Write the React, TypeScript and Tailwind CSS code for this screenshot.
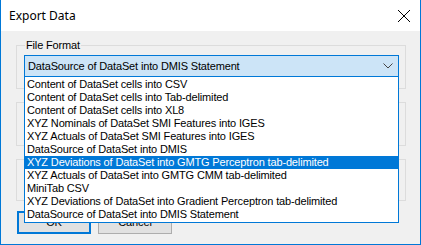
import React from "react";

const items = [
  "Content of DataSet cells into CSV",
  "Content of DataSet cells into Tab-delimited",
  "Content of DataSet cells into XL8",
  "XYZ Nominals of DataSet SMI Features into IGES",
  "XYZ Actuals of DataSet SMI Features into IGES",
  "DataSource of DataSet into DMIS",
  "XYZ Deviations of DataSet into GMTG Perceptron tab-delimited",
  "XYZ Actuals of DataSet into GMTG CMM tab-delimited",
  "MiniTab CSV",
  "XYZ Deviations of DataSet into Gradient Perceptron tab-delimited",
  "DataSource of DataSet into DMIS Statement",
];

export default function App() {
  const sans = { fontFamily: '"Liberation Sans", Arial, sans-serif' };
  return (
    <div className="w-[421px] h-[245px] flex flex-col border-x border-b border-[#0078d7] bg-[#f0f0f0] overflow-hidden" style={sans}>
      <div className="h-[31px] bg-white flex items-center justify-between pl-[8px] pr-[9px] shrink-0">
        <span className="text-[12px] text-black" style={{ fontFamily: '"Noto Sans", "Open Sans", sans-serif' }}>Export Data</span>
        <svg width="14" height="14" viewBox="0 0 14 14" className="mt-[1px]">
          <path d="M1 1 L13 13 M13 1 L1 13" stroke="#000" strokeWidth="1" />
        </svg>
      </div>
      <div className="flex-1 flex flex-col pl-[15px] pt-[14px] tracking-[-0.15px]">
        <div className="relative w-[390px] h-[44px] border border-[#dcdcdc]">
          <span className="absolute -top-[8px] left-[8px] px-[1px] bg-[#f0f0f0] text-[11px] leading-[14px] text-black">File Format</span>
          <div className="relative ml-[7px] mt-[9px] w-[375px]">
            <div className="h-[22px] border border-[#0078d7] bg-[#cce4f7] flex items-center justify-between pl-[3px] pr-[5px]">
              <span className="text-[11px] text-black">DataSource of DataSet into DMIS Statement</span>
              <svg width="10" height="6" viewBox="0 0 10 6">
                <path d="M0.5 0.5 L5 5 L9.5 0.5" stroke="#444" strokeWidth="1" fill="none" />
              </svg>
            </div>
            <div className="absolute left-0 top-full w-[375px] border border-[#0078d7] border-t-0 bg-white z-10 pt-[1px] pb-[1px]">
              {items.map((t, i) => (
                <div
                  key={i}
                  className={
                    "h-[13px] leading-[13px] text-[11px] pl-[2px] whitespace-nowrap " +
                    (i === 6 ? "bg-[#0078d7] text-white" : "text-black")
                  }
                >
                  {t}
                </div>
              ))}
            </div>
          </div>
        </div>
        <div className="mt-[13px] w-[390px] h-[44px] border border-[#dcdcdc]" />
        <div className="mt-[13px] w-[390px] h-[42px] border border-[#dcdcdc]" />
        <div className="mt-[10px] flex gap-[7px] pl-[1px]">
          <button className="w-[74px] h-[23px] border-2 border-[#0078d7] bg-[#e1e1e1] text-[11px] text-black">OK</button>
          <button className="w-[74px] h-[23px] border border-[#adadad] bg-[#e1e1e1] text-[11px] text-black">Cancel</button>
        </div>
      </div>
    </div>
  );
}
